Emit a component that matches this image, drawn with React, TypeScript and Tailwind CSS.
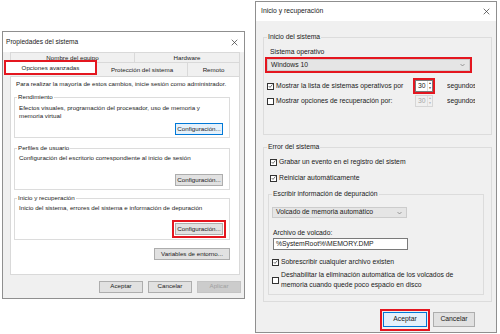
import React from "react";

function CloseX() {
  return (
    <svg width="7" height="7" viewBox="0 0 10 10">
      <path d="M1 1 L9 9 M9 1 L1 9" stroke="#333" strokeWidth="1" fill="none" />
    </svg>
  );
}

function Chevron() {
  return (
    <svg width="5" height="4" viewBox="0 0 10 6">
      <path d="M1 1 L5 5 L9 1" stroke="#666" strokeWidth="1.2" fill="none" />
    </svg>
  );
}

function Check({ checked }: { checked?: boolean }) {
  return (
    <span className="w-[7px] h-[7px] border border-[#333] bg-white flex items-center justify-center shrink-0">
      {checked && (
        <svg width="6" height="6" viewBox="0 0 10 10">
          <path d="M1.5 5.2 L4 7.8 L8.8 2" fill="none" stroke="#222" strokeWidth="1.3" />
        </svg>
      )}
    </span>
  );
}

function Btn({ text, focused, disabled, className }: { text: string; focused?: boolean; disabled?: boolean; className?: string }) {
  const look = disabled
    ? "bg-[#cccccc] text-[#a0a0a0] border-[#c4c4c4]"
    : focused
    ? "bg-[#e5f1fb] text-[#1a1a1a] border-[#0078d7]"
    : "bg-[#e1e1e1] text-[#1a1a1a] border-[#adadad]";
  return <div className={`flex items-center justify-center border leading-none ${look} ${className ?? ""}`}>{text}</div>;
}

function Spinner({ disabled }: { disabled?: boolean }) {
  return (
    <div className={`w-full h-full flex items-center border ${disabled ? "border-[#d6d6d6] bg-[#f0f0f0] text-[#a8a8a8]" : "border-[#7a7a7a] bg-white text-[#1a1a1a]"}`}>
      <span className="flex-1 pl-[2px] leading-none">30</span>
      <div className="flex flex-col w-[5px] h-full border-l border-[#e0e0e0]">
        <div className="flex-1 flex items-center justify-center text-[3px] leading-none">▲</div>
        <div className="flex-1 flex items-center justify-center text-[3px] leading-none">▼</div>
      </div>
    </div>
  );
}

function LeftDialog() {
  return (
    <div className="mt-[31px] ml-[2px] w-[243px] h-[268px] border border-[#8f8f8f] bg-[#f0f0f0] flex flex-col text-[6.2px] text-[#1a1a1a] shrink-0">
      <div className="h-[20px] bg-white flex items-center justify-between pl-[3px] pr-[6px]">
        <span className="text-[6.6px]">Propiedades del sistema</span>
        <CloseX />
      </div>

      {/* pestañas */}
      <div className="ml-[7px] w-[230px] flex flex-col">
        <div className="flex h-[10px]">
          <div className="w-[125px] border border-b-0 border-[#d9d9d9] flex justify-center pt-[2px] leading-none">Nombre del equipo</div>
          <div className="flex-1 border border-b-0 border-l-0 border-[#d9d9d9] flex justify-center pt-[2px] leading-none">Hardware</div>
        </div>
        <div className="flex h-[14px]">
          <div className="relative z-10 -ml-[6px] -mt-[2px] w-[93px] h-[15px] border-2 border-[#e4161f] bg-white flex items-center justify-center">
            Opciones avanzadas
          </div>
          <div className="w-[91px] border border-b-0 border-l-0 border-[#d9d9d9] flex items-center justify-center">Protección del sistema</div>
          <div className="flex-1 border border-b-0 border-l-0 border-[#d9d9d9] flex items-center justify-center">Remoto</div>
        </div>
      </div>

      {/* panel */}
      <div className="ml-[7px] w-[230px] h-[199px] border border-[#d9d9d9] bg-white flex flex-col">
        <p className="pl-[5px] pt-[3px] leading-[8px] whitespace-nowrap">Para realizar la mayoría de estos cambios, inicie sesión como administrador.</p>

        <fieldset className="mt-[5px] ml-[3px] mr-[9px] border border-[#dcdcdc] pb-[2px]">
          <legend className="ml-[2px] px-[1px] leading-[8px]">Rendimiento</legend>
          <p className="pt-[3px] pl-[4px] pr-[4px] leading-[8px]">Efectos visuales, programación del procesador, uso de memoria y memoria virtual</p>
          <div className="flex justify-end pr-[6px] mt-[3px]">
            <Btn text="Configuración..." focused className="w-[48px] h-[12px]" />
          </div>
        </fieldset>

        <fieldset className="mt-[6px] ml-[3px] mr-[9px] border border-[#dcdcdc] pb-[3px]">
          <legend className="ml-[2px] px-[1px] leading-[8px]">Perfiles de usuario</legend>
          <p className="pt-[2px] pl-[4px] leading-[8px]">Configuración del escritorio correspondiente al inicio de sesión</p>
          <div className="flex justify-end pr-[6px] mt-[12px]">
            <Btn text="Configuración..." className="w-[48px] h-[12px]" />
          </div>
        </fieldset>

        <fieldset className="mt-[4px] ml-[3px] mr-[9px] border border-[#dcdcdc] pb-[1px]">
          <legend className="ml-[2px] px-[1px] leading-[8px]">Inicio y recuperación</legend>
          <p className="pt-[2px] pl-[4px] leading-[8px]">Inicio del sistema, errores del sistema e información de depuración</p>
          <div className="flex justify-end pr-[3px] mt-[8px]">
            <div className="border-2 border-[#e4161f] p-[1px]">
              <Btn text="Configuración..." className="w-[48px] h-[12px]" />
            </div>
          </div>
        </fieldset>

        <div className="flex justify-end mr-[9px] mt-[8px]">
          <Btn text="Variables de entorno..." className="w-[76px] h-[12px]" />
        </div>
      </div>

      {/* pie */}
      <div className="flex-1 flex items-center justify-end gap-[5px] pr-[3px]">
        <Btn text="Aceptar" className="w-[44px] h-[12px]" />
        <Btn text="Cancelar" className="w-[44px] h-[12px]" />
        <Btn text="Aplicar" disabled className="w-[44px] h-[12px]" />
      </div>
    </div>
  );
}

function RightDialog() {
  return (
    <div className="mt-[1px] ml-[10px] w-[242px] h-[332px] border border-[#8f8f8f] bg-[#f0f0f0] flex flex-col text-[6.8px] text-[#1a1a1a] shrink-0">
      <div className="h-[19px] bg-white flex items-center justify-between pl-[5px] pr-[6px] shrink-0">
        <span>Inicio y recuperación</span>
        <CloseX />
      </div>

      {/* Inicio del sistema */}
      <fieldset className="mt-[12px] ml-[7px] mr-[4px] border border-[#dcdcdc] pl-[1px] pb-[27px]">
        <legend className="ml-[2px] px-[1px] leading-[8px]">Inicio del sistema</legend>
        <p className="pt-[7px] pl-[5px] leading-[8px]">Sistema operativo</p>
        <div className="mt-[1px] w-[207px] h-[16px] border-2 border-[#e4161f]">
          <div className="w-full h-full bg-[#e5e5e5] border border-[#cccccc] flex items-center justify-between pl-[3px] pr-[4px]">
            <span>Windows 10</span>
            <Chevron />
          </div>
        </div>
        <div className="mt-[5px] flex items-center h-[16px]">
          <div className="w-[148px] shrink-0 pl-[2px] flex items-center gap-[2px] whitespace-nowrap">
            <Check checked />
            <span>Mostrar la lista de sistemas operativos por</span>
          </div>
          <div className="w-[22px] h-[16px] shrink-0 border-2 border-[#e4161f]">
            <Spinner />
          </div>
          <div className="ml-[12px] w-[28px] shrink-0 overflow-hidden whitespace-nowrap">segundos</div>
        </div>
        <div className="mt-[1px] flex items-center h-[12px]">
          <div className="w-[148px] shrink-0 pl-[2px] flex items-center gap-[2px] whitespace-nowrap">
            <Check />
            <span>Mostrar opciones de recuperación por:</span>
          </div>
          <div className="w-[22px] h-[12px] shrink-0 px-[2px]">
            <Spinner disabled />
          </div>
          <div className="ml-[12px] w-[28px] shrink-0 overflow-hidden whitespace-nowrap">segundos</div>
        </div>
      </fieldset>

      {/* Error del sistema */}
      <fieldset className="mt-[8px] ml-[7px] mr-[4px] border border-[#dcdcdc] pl-[1px] pb-[6px]">
        <legend className="ml-[2px] px-[1px] leading-[8px]">Error del sistema</legend>
        <div className="mt-[6px] ml-[5px] h-[10px] flex items-center gap-[2px]">
          <Check checked />
          <span>Grabar un evento en el registro del sistem</span>
        </div>
        <div className="mt-[6px] ml-[5px] h-[10px] flex items-center gap-[2px]">
          <Check checked />
          <span>Reiniciar automáticamente</span>
        </div>

        <fieldset className="mt-[7px] ml-[3px] w-[216px] border border-[#dcdcdc] pl-[1px] pb-[4px]">
          <legend className="ml-[2px] px-[1px] leading-[8px]">Escribir información de depuración</legend>
          <div className="mt-[9px] ml-[2px] w-[135px] h-[11px] bg-[#e5e5e5] border border-[#cccccc] flex items-center justify-between pl-[3px] pr-[4px]">
            <span>Volcado de memoria automático</span>
            <Chevron />
          </div>
          <p className="mt-[11px] ml-[3px] leading-[8px]">Archivo de volcado:</p>
          <div className="mt-[1px] ml-[3px] w-[135px] h-[12px] bg-white border border-[#7a7a7a] flex items-center pl-[2px]">
            %SystemRoot%\MEMORY.DMP
          </div>
          <div className="mt-[7px] ml-[2px] h-[10px] flex items-center gap-[2px]">
            <Check checked />
            <span>Sobrescribir cualquier archivo existen</span>
          </div>
          <div className="mt-[3px] ml-[2px] flex items-center gap-[2px]">
            <Check />
            <span className="leading-[10px]">
              Deshabilitar la eliminación automática de los volcados de
              <br />
              memoria cuando quede poco espacio en disco
            </span>
          </div>
        </fieldset>
      </fieldset>

      {/* botones */}
      <div className="mt-[7px] flex justify-end items-start pr-[21px]">
        <div className="border-2 border-[#e4161f] p-[1px] pb-[2px]">
          <Btn text="Aceptar" focused className="w-[44px] h-[15px]" />
        </div>
        <Btn text="Cancelar" className="ml-[3px] mt-[3px] w-[42px] h-[15px]" />
      </div>
    </div>
  );
}

export default function App() {
  return (
    <div className="w-[500px] h-[334px] bg-white flex items-start overflow-hidden font-['Liberation_Sans',Arial,sans-serif]">
      <LeftDialog />
      <RightDialog />
    </div>
  );
}
